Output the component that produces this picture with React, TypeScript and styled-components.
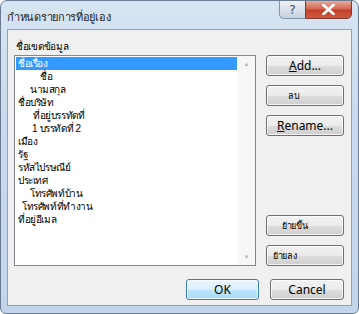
import styled, { createGlobalStyle } from "styled-components";

const GlobalStyle = createGlobalStyle`
  html, body {
    margin: 0;
    padding: 0;
    background: #ffffff;
  }
  body {
    font-family: "Liberation Sans", "DejaVu Sans", sans-serif;
  }
`;

const fields: { label: string; indent: number }[] = [
  { label: "ชื่อเรื่อง", indent: 0 },
  { label: "ชื่อ", indent: 22 },
  { label: "นามสกุล", indent: 12 },
  { label: "ชื่อบริษัท", indent: 0 },
  { label: "ที่อยู่บรรทัดที่", indent: 15 },
  { label: "1 บรรทัดที่ 2", indent: 14 },
  { label: "เมือง", indent: 0 },
  { label: "รัฐ", indent: 0 },
  { label: "รหัสไปรษณีย์", indent: 0 },
  { label: "ประเทศ", indent: 0 },
  { label: "โทรศัพท์บ้าน", indent: 12 },
  { label: "โทรศัพท์ที่ทำงาน", indent: 4 },
  { label: "ที่อยู่อีเมล", indent: 0 },
];

const App = () => {
  return (
    <>
      <GlobalStyle />
      <Window>
        <TitleBar>
          <Title>กำหนดรายการที่อยู่เอง</Title>
          <Caption>
            <HelpButton>?</HelpButton>
            <CloseButton>
              <svg width="13" height="11" viewBox="0 0 13 11">
                <path
                  d="M1.5 1 L11.5 10 M11.5 1 L1.5 10"
                  stroke="#ffffff"
                  strokeWidth="2.6"
                  strokeLinecap="square"
                />
              </svg>
            </CloseButton>
          </Caption>
        </TitleBar>
        <Client>
          <FieldLabel>ชื่อเขตข้อมูล</FieldLabel>
          <Main>
            <ListBox>
              <Items>
                {fields.map((f, i) => (
                  <Item key={f.label} $selected={i === 0}>
                    <span style={{ paddingLeft: f.indent }}>{f.label}</span>
                  </Item>
                ))}
              </Items>
              <ScrollBar>
                <Arrow>▲</Arrow>
                <Arrow>▼</Arrow>
              </ScrollBar>
            </ListBox>
            <SideButtons>
              <Group>
                <Button>
                  <u>A</u>dd...
                </Button>
                <Button $thai $indent={21}>
                  ลบ
                </Button>
                <Button>
                  <u>R</u>ename...
                </Button>
              </Group>
              <Group>
                <Button $thai $indent={15}>
                  ย้ายขึ้น
                </Button>
                <Button $thai $indent={6}>
                  ย้ายลง
                </Button>
              </Group>
            </SideButtons>
          </Main>
          <Footer>
            <Button $default $width={73}>
              OK
            </Button>
            <Button $width={74}>Cancel</Button>
          </Footer>
        </Client>
      </Window>
    </>
  );
};

const Window = styled.div`
  width: 359px;
  height: 314px;
  box-sizing: border-box;
  border: 1px solid #6b7c92;
  border-radius: 7px 7px 6px 6px;
  background: linear-gradient(180deg, #d7e4f2 0%, #c9daee 40%, #c3d5ea 100%);
  display: flex;
  flex-direction: column;
  overflow: hidden;
`;

const TitleBar = styled.div`
  height: 28px;
  display: flex;
  align-items: flex-start;
  padding-left: 6px;
`;

const Title = styled.div`
  margin-top: 7px;
  font-size: 11px;
  letter-spacing: -0.3px;
  color: #1e1e1e;
`;

const Caption = styled.div`
  margin-left: auto;
  margin-right: 6px;
  display: flex;
  margin-top: -1px;
`;

const HelpButton = styled.div`
  width: 26px;
  height: 19px;
  box-sizing: border-box;
  border: 1px solid #8294ab;
  border-right: none;
  border-radius: 0 0 0 5px;
  background: linear-gradient(180deg, #eef2f7 0%, #d9e1ea 50%, #c7d2df 100%);
  display: flex;
  align-items: center;
  justify-content: center;
  font-family: "DejaVu Sans", sans-serif;
  font-size: 12px;
  color: #3d4a5c;
`;

const CloseButton = styled.div`
  width: 47px;
  height: 19px;
  box-sizing: border-box;
  border: 1px solid #7a3a33;
  border-radius: 0 0 5px 0;
  background: linear-gradient(180deg, #e8a99c 0%, #d46a56 45%, #c2402a 55%, #cf5a40 100%);
  display: flex;
  align-items: center;
  justify-content: center;
`;

const Client = styled.div`
  flex: 1;
  margin: 0 6px 7px 6px;
  border: 1px solid #8ea2bb;
  background: #f0f0f0;
  padding: 9px 7px 0 6px;
  display: flex;
  flex-direction: column;
`;

const FieldLabel = styled.div`
  font-size: 10px;
  letter-spacing: -0.3px;
  line-height: 15px;
  color: #000;
  margin-left: 2px;
`;

const Main = styled.div`
  display: flex;
  gap: 10px;
  margin-top: 1px;
`;

const ListBox = styled.div`
  width: 242px;
  height: 211px;
  box-sizing: border-box;
  border: 1px solid #828790;
  background: #ffffff;
  display: flex;
`;

const Items = styled.div`
  flex: 1;
  padding: 1px 1px 0 1px;
`;

const Item = styled.div<{ $selected?: boolean }>`
  height: 13px;
  line-height: 13px;
  font-size: 10px;
  letter-spacing: -0.4px;
  padding-left: 2px;
  white-space: nowrap;
  color: ${({ $selected }) => ($selected ? "#ffffff" : "#000000")};
  background: ${({ $selected }) => ($selected ? "#3399ff" : "transparent")};
`;

const ScrollBar = styled.div`
  width: 17px;
  background: #f7f7f7;
  display: flex;
  flex-direction: column;
  justify-content: space-between;
  align-items: center;
  padding: 5px 0 5px;
`;

const Arrow = styled.span`
  font-size: 6px;
  color: #b4b4b4;
`;

const SideButtons = styled.div`
  width: 78px;
  display: flex;
  flex-direction: column;
  justify-content: space-between;
`;

const Group = styled.div`
  display: flex;
  flex-direction: column;
  gap: 9px;
`;

const Button = styled.div<{
  $default?: boolean;
  $thai?: boolean;
  $indent?: number;
  $width?: number;
}>`
  width: ${({ $width }) => ($width ? `${$width}px` : "auto")};
  height: 21px;
  box-sizing: border-box;
  border: 1px solid ${({ $default }) => ($default ? "#3c7fb1" : "#707070")};
  border-radius: 3px;
  background: ${({ $default }) =>
    $default
      ? "linear-gradient(180deg, #eaf6fd 0%, #d9f0fc 50%, #bee6fd 51%, #a7d9f5 100%)"
      : "linear-gradient(180deg, #f2f2f2 0%, #ebebeb 50%, #dddddd 51%, #cfcfcf 100%)"};
  box-shadow: inset 0 0 0 1px rgba(255, 255, 255, 0.75);
  display: flex;
  align-items: center;
  justify-content: ${({ $indent }) => ($indent !== undefined ? "flex-start" : "center")};
  padding-left: ${({ $indent }) => ($indent !== undefined ? `${$indent}px` : "0")};
  font-family: ${({ $thai }) =>
    $thai ? `"Liberation Sans", "DejaVu Sans", sans-serif` : `"Noto Sans", "Open Sans", sans-serif`};
  font-size: ${({ $thai }) => ($thai ? "9px" : "12px")};
  letter-spacing: ${({ $thai }) => ($thai ? "-0.3px" : "0")};
  color: #000;
  u {
    text-decoration: underline;
  }
`;

const Footer = styled.div`
  display: flex;
  justify-content: flex-end;
  gap: 11px;
  margin-top: 13px;
  padding-right: 0;
`;

export default App;
